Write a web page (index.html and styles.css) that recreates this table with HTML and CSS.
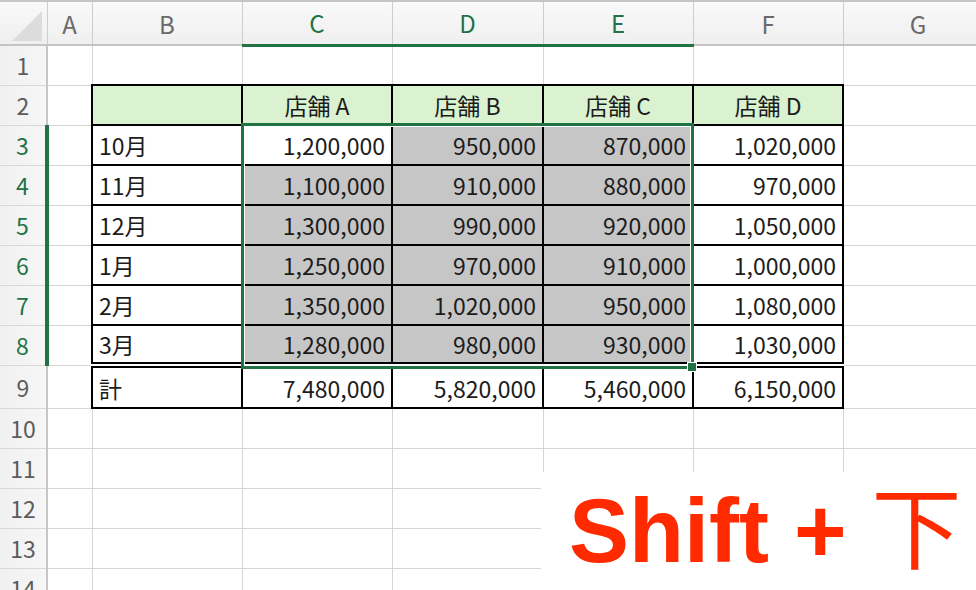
FILE: index.html
```html
<!DOCTYPE html>
<html lang="ja">
<head>
  <meta charset="UTF-8">
  <title>Shift + 下</title>
  <link rel="stylesheet" href="styles.css">
</head>
<body>
  <div class="sheet">
    <table class="grid">
      <colgroup>
        <col class="w-rh">
        <col class="w-a">
        <col class="w-std">
        <col class="w-std">
        <col class="w-d">
        <col class="w-std">
        <col class="w-std">
        <col class="w-std">
      </colgroup>
      <thead>
        <tr class="cols">
          <th class="corner">
            <svg width="46" height="42" viewBox="0 0 46 42"><polygon points="42,9 42,39 12,39" fill="#dcdcdc"/></svg>
          </th>
          <th>A</th>
          <th>B</th>
          <th class="on">C</th>
          <th class="on">D</th>
          <th class="on">E</th>
          <th>F</th>
          <th>G</th>
        </tr>
      </thead>
      <tbody>
        <tr>
          <th class="rh">1</th>
          <td></td><td></td><td></td><td></td><td></td><td></td><td></td>
        </tr>
        <tr>
          <th class="rh">2</th>
          <td></td>
          <td class="box head"></td>
          <td class="box head">店舗 A</td>
          <td class="box head">店舗 B</td>
          <td class="box head">店舗 C</td>
          <td class="box head">店舗 D</td>
          <td></td>
        </tr>
        <tr>
          <th class="rh on">3</th>
          <td></td>
          <td class="box">10月</td>
          <td class="box num">1,200,000</td>
          <td class="box num sel">950,000</td>
          <td class="box num sel">870,000</td>
          <td class="box num">1,020,000</td>
          <td></td>
        </tr>
        <tr>
          <th class="rh on">4</th>
          <td></td>
          <td class="box">11月</td>
          <td class="box num sel">1,100,000</td>
          <td class="box num sel">910,000</td>
          <td class="box num sel">880,000</td>
          <td class="box num">970,000</td>
          <td></td>
        </tr>
        <tr>
          <th class="rh on">5</th>
          <td></td>
          <td class="box">12月</td>
          <td class="box num sel">1,300,000</td>
          <td class="box num sel">990,000</td>
          <td class="box num sel">920,000</td>
          <td class="box num">1,050,000</td>
          <td></td>
        </tr>
        <tr>
          <th class="rh on">6</th>
          <td></td>
          <td class="box">1月</td>
          <td class="box num sel">1,250,000</td>
          <td class="box num sel">970,000</td>
          <td class="box num sel">910,000</td>
          <td class="box num">1,000,000</td>
          <td></td>
        </tr>
        <tr>
          <th class="rh on">7</th>
          <td></td>
          <td class="box">2月</td>
          <td class="box num sel">1,350,000</td>
          <td class="box num sel">1,020,000</td>
          <td class="box num sel">950,000</td>
          <td class="box num">1,080,000</td>
          <td></td>
        </tr>
        <tr>
          <th class="rh on">8</th>
          <td></td>
          <td class="box">3月</td>
          <td class="box num sel">1,280,000</td>
          <td class="box num sel">980,000</td>
          <td class="box num sel">930,000</td>
          <td class="box num">1,030,000</td>
          <td></td>
        </tr>
        <tr class="total">
          <th class="rh">9</th>
          <td></td>
          <td class="box">計</td>
          <td class="box num">7,480,000</td>
          <td class="box num">5,820,000</td>
          <td class="box num">5,460,000</td>
          <td class="box num">6,150,000</td>
          <td></td>
        </tr>
        <tr>
          <th class="rh">10</th>
          <td></td><td></td><td></td><td></td><td></td><td></td><td></td>
        </tr>
        <tr>
          <th class="rh">11</th>
          <td></td><td></td><td></td><td></td><td></td><td></td><td></td>
        </tr>
        <tr>
          <th class="rh">12</th>
          <td></td><td></td><td></td><td></td><td></td><td></td><td></td>
        </tr>
        <tr>
          <th class="rh">13</th>
          <td></td><td></td><td></td><td></td><td></td><td></td><td></td>
        </tr>
        <tr>
          <th class="rh">14</th>
          <td></td><td></td><td></td><td></td><td></td><td></td><td></td>
        </tr>
      </tbody>
    </table>

    <!-- selected range C3:E8 -->
    <div class="selection"></div>
    <div class="handle"></div>

    <div class="caption">Shift + <span class="kanji">下</span></div>
  </div>
</body>
</html>
```

FILE: styles.css
```css
body {
  margin: 0;
  background: #fff;
  font-family: "Noto Sans CJK JP", "Noto Sans", sans-serif;
  overflow: hidden;
}

.sheet {
  position: relative;
  width: 976px;
  height: 590px;
  overflow: hidden;
}

.grid {
  border-collapse: collapse;
  table-layout: fixed;
  width: 993px;
  font-size: 23px;
  color: #1c1c1c;
}

.w-rh { width: 47px; }
.w-a { width: 45px; }
.w-std { width: 150px; }
.w-d { width: 151px; }

.grid tr {
  height: 40px;
}

.grid td {
  padding: 0 6px;
  border: 1px solid #d6d6d6;
  white-space: nowrap;
  overflow: hidden;
}

/* column letters */
.grid tr.cols {
  height: 41px;
}

.cols th {
  font-weight: normal;
  font-size: 24px;
  color: #6a6a6a;
  background: linear-gradient(#f9f9f9, #efefef);
  border-top: 2px solid #c6c6c6;
  border-right: 1px solid #cdcdcd;
  border-bottom: 2px solid #c4c4c4;
  padding: 0;
}

.cols th.on {
  color: #217346;
  border-bottom: 3px solid #217346;
}

.corner {
  vertical-align: bottom;
}

.corner svg {
  display: block;
}

/* row numbers */
.rh {
  font-weight: normal;
  color: #5c5c5c;
  background: linear-gradient(90deg, #f0f0f0, #f6f6f6);
  border-top: 1px solid #d8d8d8;
  border-bottom: 1px solid #d8d8d8;
  border-right: 2px solid #c6c6c6;
  padding: 0;
}

.rh.on {
  color: #217346;
  border-right: 4px solid #217346;
}

/* data table */
.grid td.box {
  border: 2px solid #000;
}

.grid td.head {
  background: #daf2d0;
  text-align: center;
}

.grid td.num {
  text-align: right;
}

.grid td.sel {
  background: #c6c6c6;
}

.grid tr.total {
  height: 43px;
}

.grid tr.total td.box {
  border-top: 6px double #000;
}

/* selection frame drawn over the cells */
.selection {
  position: absolute;
  left: 241px;
  top: 123px;
  width: 453px;
  height: 246px;
  box-sizing: border-box;
  border: 3px solid #217346;
  box-shadow: inset 0 0 0 1px #fff;
}

.handle {
  position: absolute;
  left: 687px;
  top: 362px;
  width: 8px;
  height: 8px;
  background: #217346;
  border: 1px solid #fff;
}

/* overlay caption */
.caption {
  position: absolute;
  left: 541px;
  top: 472px;
  right: 0;
  bottom: 0;
  padding: 6px 0 0 28px;
  background: #fff;
  color: #ff2a00;
  font-family: "Liberation Sans", Arial, "Noto Sans CJK JP", sans-serif;
  font-weight: bold;
  font-size: 90px;
  line-height: 90px;
  white-space: nowrap;
}

.kanji {
  font-family: "Noto Sans CJK JP", sans-serif;
  font-weight: normal;
}
```
